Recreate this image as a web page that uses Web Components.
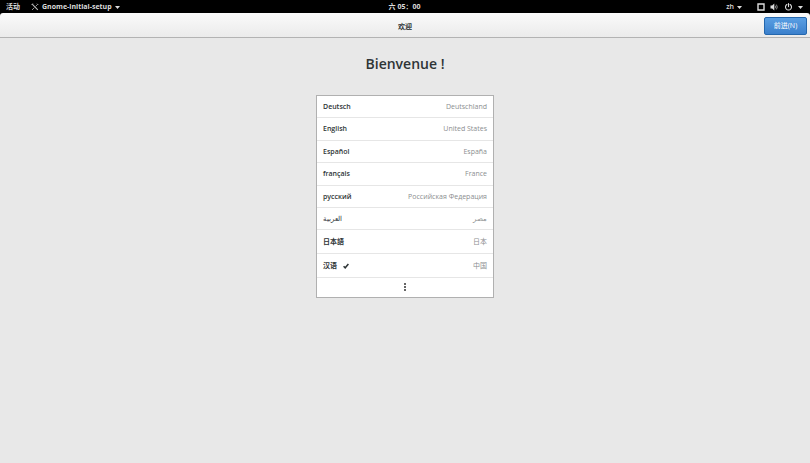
<!DOCTYPE html>
<html lang="zh">
<head>
<meta charset="utf-8">
<title>欢迎</title>
<style>
html, body { margin: 0; min-height: 100%; }
body { background: #e8e8e8; font-family: "Open Sans", "Noto Sans CJK SC", sans-serif; font-size: 7px; line-height: 12px; color: #2e3436; }
</style>
</head>
<body>
<setup-screen></setup-screen>
<script>
const define = (name, html) => {
  const template = document.createElement('template');
  template.innerHTML = html;
  customElements.define(name, class extends HTMLElement {
    constructor() {
      super();
      this.attachShadow({ mode: 'open' }).append(template.content.cloneNode(true));
    }
  });
};

define('top-bar', `
<style>
:host { display: grid; grid-template-columns: 1fr auto 1fr; align-items: center; box-sizing: border-box; height: 13px; padding: 1px 7px 0 6px; background: #000; color: #dcdcdc; font-weight: 700; }
button { display: flex; align-items: center; gap: 3px; height: 12px; padding: 0; border: 0; background: none; color: inherit; font: inherit; line-height: 12px; white-space: nowrap; }
.left, .right { display: flex; align-items: center; gap: 11px; }
.right { justify-content: flex-end; gap: 15px; }
.status { gap: 5px; }
.zh { font-weight: 600; }
svg { display: block; flex: none; }
</style>
<div class="left">
  <button>活动</button>
  <button>
    <svg width="8" height="8" viewBox="0 0 8 8" fill="none" stroke="#bbb"><path d="M1.2 1.2 6.8 6.8" stroke-width="1.1"/><path d="M1 7 3.4 4.6M4.6 3.4 6.5 1.5" stroke-width=".8"/><path d="M.5 1.8 1.8.5M6 .7 7.3 2" stroke-width=".8"/></svg>
    Gnome-initial-setup
    <svg width="5" height="3" viewBox="0 0 5 3"><path d="M0 0h5L2.5 3z" fill="#ddd"/></svg>
  </button>
</div>
<button>六 05：00</button>
<div class="right">
  <button class="zh">zh <svg width="5" height="3" viewBox="0 0 5 3"><path d="M0 0h5L2.5 3z" fill="#ddd"/></svg></button>
  <button class="status" aria-label="系统">
    <svg width="8" height="8" viewBox="0 0 8 8"><path d="M1 1h6v6H1z" fill="none" stroke="#ddd" stroke-width="1.4"/></svg>
    <svg width="9" height="8" viewBox="0 0 9 8"><path d="M.5 2.5h1.7L4.3.6v6.8L2.2 5.5H.5z" fill="#ddd"/><path d="M5.3 2.7q1 1.3 0 2.6M6.4 1.6q1.8 2.4 0 4.8" fill="none" stroke="#aaa" stroke-width=".8"/></svg>
    <svg width="9" height="8" viewBox="0 0 9 8" fill="none" stroke="#ddd" stroke-linecap="round"><path d="M2.9 1.5a3 3 0 1 0 3.2 0M4.5.6v3" stroke-width="1.1"/></svg>
    <svg width="5" height="3" viewBox="0 0 5 3"><path d="M0 0h5L2.5 3z" fill="#ddd"/></svg>
  </button>
</div>`);

define('header-bar', `
<style>
:host { display: block; background: #000; }
header { display: grid; grid-template-columns: 1fr auto 1fr; align-items: center; box-sizing: border-box; height: 25px; padding: 2px 3px 0; border-bottom: 1px solid #b3b3b3; border-radius: 3px 3px 0 0; background: linear-gradient(#fafafa, #ebebeb); }
h1 { grid-column: 2; margin: 0; padding-top: 1px; font-size: 7px; line-height: 12px; font-weight: 700; }
button { justify-self: end; height: 18px; min-width: 43px; padding: 0 8px; border: 1px solid #2467ad; border-radius: 2px; background: linear-gradient(#5a9fe3, #3b80cc); color: #fff; font: inherit; line-height: 14px; }
</style>
<header><h1><slot></slot></h1><button><slot name="action"></slot></button></header>`);

define('locale-row', `
<style>
:host { display: block; border-bottom: 1px solid #e6e6e6; }
button { display: flex; align-items: center; box-sizing: border-box; width: 100%; height: 100%; padding: 0 6px; border: 0; background: none; color: #2e3436; font: inherit; line-height: 14px; white-space: nowrap; }
.name { font-weight: 600; }
:host([lang="ar"]) .name { font-weight: 400; }
.region { margin-left: auto; color: #8b8e8f; }
svg { display: none; margin-left: 6px; }
:host([selected]) svg { display: block; }
</style>
<button><span class="name"><slot></slot></span><svg width="6" height="6" viewBox="0 0 6 6"><path d="M.6 3.2 2.2 4.8 5.4 1" fill="none" stroke="#2e3436" stroke-width="1.5"/></svg><span class="region"><slot name="region"></slot></span></button>`);

define('more-row', `
<style>
:host { display: grid; }
button { display: grid; place-items: center; padding: 0; border: 0; background: none; }
</style>
<button aria-label="更多"><svg width="4" height="9" viewBox="0 0 4 9" fill="#666"><path d="M1 0h2v2H1zM1 3h2v2H1zM1 6h2v2H1z"/></svg></button>`);

define('locale-list', `
<style>
:host { display: grid; grid-template-rows: 22px 23px 22px 23px 22px 22px 24px 24px 19px; box-sizing: border-box; width: 178px; max-width: 100%; border: 1px solid #b0b0b0; background: #fff; }
</style>
<slot></slot>`);

define('setup-screen', `
<style>
:host { display: block; }
main { display: flex; flex-direction: column; align-items: center; padding-top: 16px; }
h2 { margin: 0 0 21px; font-size: 14px; line-height: 20px; font-weight: 600; }
</style>
<top-bar></top-bar>
<header-bar>欢迎<span slot="action">前进(N)</span></header-bar>
<main>
  <h2>Bienvenue !</h2>
  <locale-list>
    <locale-row>Deutsch<span slot="region">Deutschland</span></locale-row>
    <locale-row>English<span slot="region">United States</span></locale-row>
    <locale-row>Español<span slot="region">España</span></locale-row>
    <locale-row>français<span slot="region">France</span></locale-row>
    <locale-row>русский<span slot="region">Российская Федерация</span></locale-row>
    <locale-row lang="ar">العربية<span slot="region">مصر</span></locale-row>
    <locale-row>日本語<span slot="region">日本</span></locale-row>
    <locale-row selected>汉语<span slot="region">中国</span></locale-row>
    <more-row></more-row>
  </locale-list>
</main>`);
</script>
</body>
</html>
